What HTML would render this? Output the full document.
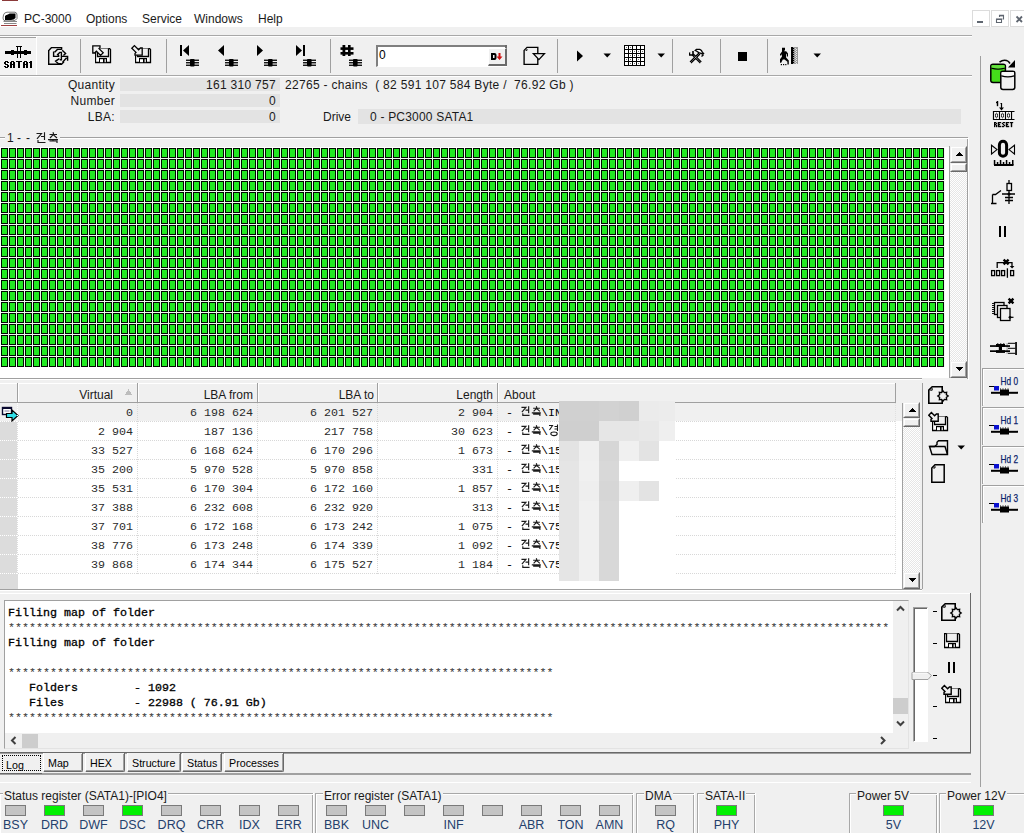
<!DOCTYPE html><html><head><meta charset="utf-8"><style>
html,body{margin:0;padding:0}
body{width:1024px;height:833px;overflow:hidden;position:relative;background:#f0f0f0;font-family:"Liberation Sans",sans-serif;font-size:12px;color:#000}
.t{position:absolute;white-space:pre;line-height:14px}
.m{font-family:"Liberation Mono",monospace;font-size:11.67px;line-height:15px}
.s{font-size:11px}
</style></head><body>
<div style="position:absolute;left:0px;top:0px;width:1024px;height:27px;background:#fff"></div>
<div style="position:absolute;left:2px;top:0px;width:16px;height:1px;background:#8b3a3a"></div>
<div style="position:absolute;left:1px;top:25px;width:16px;height:1px;background:#a04040"></div>
<div class="t " style="left:24px;top:12px;color:#1a1a1a">PC-3000</div>
<div class="t " style="left:86px;top:12px;color:#1a1a1a">Options</div>
<div class="t " style="left:142px;top:12px;color:#1a1a1a">Service</div>
<div class="t " style="left:194px;top:12px;color:#1a1a1a">Windows</div>
<div class="t " style="left:258px;top:12px;color:#1a1a1a">Help</div>
<div style="position:absolute;left:972px;top:10px;width:18px;height:17px;background:#fff;box-sizing:border-box;border:1px solid #dcdcdc"></div>
<div style="position:absolute;left:991px;top:10px;width:18px;height:17px;background:#fff;box-sizing:border-box;border:1px solid #dcdcdc"></div>
<div style="position:absolute;left:1010px;top:10px;width:18px;height:17px;background:#fff;box-sizing:border-box;border:1px solid #dcdcdc"></div>
<div style="position:absolute;left:977px;top:21px;width:6px;height:2px;background:#5f6670"></div>
<svg style="position:absolute;left:995px;top:14px;shape-rendering:auto" width="10" height="10" viewBox="0 0 10 10" shape-rendering="crispEdges"><path d="M4.5 3V1.2H8.5V5H7.5M1.5 5.2H6.5V8.5H1.5Z" fill="none" stroke="#5f6670" stroke-width="1.1"/><rect x="4" y="1" width="5" height="1.4" fill="#5f6670"/><rect x="1" y="4.6" width="6" height="1.4" fill="#5f6670"/></svg>
<svg style="position:absolute;left:1015px;top:15px;shape-rendering:auto" width="9" height="10" viewBox="0 0 9 10" shape-rendering="crispEdges"><path d="M1.5 1.5L7 7M7 1.5L1.5 7" stroke="#5f6670" stroke-width="1.8"/></svg>
<svg style="position:absolute;left:1px;top:11px;shape-rendering:auto" width="18" height="14" viewBox="0 0 18 14" shape-rendering="crispEdges"><path d="M2.5 4Q3 1.5 6 1.2H14Q16 1.5 16 4V7.5Q15 9.5 12 9.8H4Q2 9.5 2 7Z" fill="#fff" stroke="#777" stroke-width="1"/><path d="M4 5Q6 2.5 9 2.5H14.5V7Q13 9 10 9H4Z" fill="#000"/><path d="M2.5 10.5H16M3 12.5H15.5" stroke="#888" stroke-width="1.1"/><path d="M5 3.5L8 2.5" stroke="#fff" stroke-width="1"/></svg>
<div style="position:absolute;left:0px;top:35px;width:972px;height:1px;background:#a8a8a8"></div>
<div style="position:absolute;left:0px;top:36px;width:972px;height:1px;background:#fff"></div>
<div style="position:absolute;left:0px;top:75px;width:972px;height:1px;background:#a8a8a8"></div>
<div style="position:absolute;left:0px;top:76px;width:972px;height:1px;background:#fff"></div>
<div style="position:absolute;left:36px;top:37px;width:1px;height:38px;background:#fff"></div>
<div style="position:absolute;left:80px;top:39px;width:1px;height:34px;background:#a0a0a0"></div>
<div style="position:absolute;left:166px;top:39px;width:1px;height:34px;background:#a0a0a0"></div>
<div style="position:absolute;left:330px;top:39px;width:1px;height:34px;background:#a0a0a0"></div>
<div style="position:absolute;left:557px;top:39px;width:1px;height:34px;background:#a0a0a0"></div>
<div style="position:absolute;left:672px;top:39px;width:1px;height:34px;background:#a0a0a0"></div>
<div style="position:absolute;left:720px;top:39px;width:1px;height:34px;background:#a0a0a0"></div>
<div style="position:absolute;left:767px;top:39px;width:1px;height:34px;background:#a0a0a0"></div>
<div style="position:absolute;left:376px;top:45px;width:131px;height:22px;background:#fff;box-sizing:border-box;border-style:solid;border-width:2px 1px 1px 2px;border-color:#7f7f7f #fff #fff #7f7f7f"></div>
<div style="position:absolute;left:505px;top:45px;width:2px;height:21px;background:#6a6a6a"></div>
<div class="t " style="left:379px;top:48px;font-size:12px">0</div>
<div style="position:absolute;left:488px;top:48px;width:19px;height:18px;background:#f0f0f0;box-sizing:border-box;border-style:solid;border-width:1px 2px 2px 1px;border-color:#fff #6a6a6a #6a6a6a #fff"></div>
<div style="position:absolute;left:0px;top:37px;width:36px;height:1px;background:#a0a0a0"></div>
<div style="position:absolute;left:0px;top:38px;width:36px;height:37px;background:#f3f3f3"></div>
<svg style="position:absolute;left:0px;top:40px;" width="36" height="20" viewBox="0 0 36 20" shape-rendering="crispEdges"><g fill="#000"><rect x="5" y="11" width="26" height="3"/><rect x="11" y="10" width="3" height="5"/><rect x="24" y="10" width="3" height="5"/><rect x="16" y="6" width="6" height="1"/><rect x="17" y="6" width="1" height="12"/><rect x="20" y="6" width="1" height="12"/><rect x="18" y="11" width="2" height="3"/></g></svg>
<svg style="position:absolute;left:4px;top:61px;" width="29" height="7" viewBox="0 0 29 7" shape-rendering="crispEdges"><g fill="#000"><rect x="1" y="0" width="1" height="1"/><rect x="2" y="0" width="1" height="1"/><rect x="3" y="0" width="1" height="1"/><rect x="0" y="1" width="1" height="1"/><rect x="1" y="1" width="1" height="1"/><rect x="3" y="1" width="1" height="1"/><rect x="4" y="1" width="1" height="1"/><rect x="0" y="2" width="1" height="1"/><rect x="1" y="2" width="1" height="1"/><rect x="1" y="3" width="1" height="1"/><rect x="2" y="3" width="1" height="1"/><rect x="3" y="3" width="1" height="1"/><rect x="3" y="4" width="1" height="1"/><rect x="4" y="4" width="1" height="1"/><rect x="0" y="5" width="1" height="1"/><rect x="1" y="5" width="1" height="1"/><rect x="3" y="5" width="1" height="1"/><rect x="4" y="5" width="1" height="1"/><rect x="1" y="6" width="1" height="1"/><rect x="2" y="6" width="1" height="1"/><rect x="3" y="6" width="1" height="1"/><rect x="7" y="0" width="1" height="1"/><rect x="8" y="0" width="1" height="1"/><rect x="9" y="0" width="1" height="1"/><rect x="6" y="1" width="1" height="1"/><rect x="7" y="1" width="1" height="1"/><rect x="9" y="1" width="1" height="1"/><rect x="10" y="1" width="1" height="1"/><rect x="6" y="2" width="1" height="1"/><rect x="7" y="2" width="1" height="1"/><rect x="9" y="2" width="1" height="1"/><rect x="10" y="2" width="1" height="1"/><rect x="6" y="3" width="1" height="1"/><rect x="7" y="3" width="1" height="1"/><rect x="8" y="3" width="1" height="1"/><rect x="9" y="3" width="1" height="1"/><rect x="10" y="3" width="1" height="1"/><rect x="6" y="4" width="1" height="1"/><rect x="7" y="4" width="1" height="1"/><rect x="9" y="4" width="1" height="1"/><rect x="10" y="4" width="1" height="1"/><rect x="6" y="5" width="1" height="1"/><rect x="7" y="5" width="1" height="1"/><rect x="9" y="5" width="1" height="1"/><rect x="10" y="5" width="1" height="1"/><rect x="6" y="6" width="1" height="1"/><rect x="7" y="6" width="1" height="1"/><rect x="9" y="6" width="1" height="1"/><rect x="10" y="6" width="1" height="1"/><rect x="12" y="0" width="1" height="1"/><rect x="13" y="0" width="1" height="1"/><rect x="14" y="0" width="1" height="1"/><rect x="15" y="0" width="1" height="1"/><rect x="16" y="0" width="1" height="1"/><rect x="17" y="0" width="1" height="1"/><rect x="14" y="1" width="1" height="1"/><rect x="15" y="1" width="1" height="1"/><rect x="14" y="2" width="1" height="1"/><rect x="15" y="2" width="1" height="1"/><rect x="14" y="3" width="1" height="1"/><rect x="15" y="3" width="1" height="1"/><rect x="14" y="4" width="1" height="1"/><rect x="15" y="4" width="1" height="1"/><rect x="14" y="5" width="1" height="1"/><rect x="15" y="5" width="1" height="1"/><rect x="14" y="6" width="1" height="1"/><rect x="15" y="6" width="1" height="1"/><rect x="20" y="0" width="1" height="1"/><rect x="21" y="0" width="1" height="1"/><rect x="22" y="0" width="1" height="1"/><rect x="19" y="1" width="1" height="1"/><rect x="20" y="1" width="1" height="1"/><rect x="22" y="1" width="1" height="1"/><rect x="23" y="1" width="1" height="1"/><rect x="19" y="2" width="1" height="1"/><rect x="20" y="2" width="1" height="1"/><rect x="22" y="2" width="1" height="1"/><rect x="23" y="2" width="1" height="1"/><rect x="19" y="3" width="1" height="1"/><rect x="20" y="3" width="1" height="1"/><rect x="21" y="3" width="1" height="1"/><rect x="22" y="3" width="1" height="1"/><rect x="23" y="3" width="1" height="1"/><rect x="19" y="4" width="1" height="1"/><rect x="20" y="4" width="1" height="1"/><rect x="22" y="4" width="1" height="1"/><rect x="23" y="4" width="1" height="1"/><rect x="19" y="5" width="1" height="1"/><rect x="20" y="5" width="1" height="1"/><rect x="22" y="5" width="1" height="1"/><rect x="23" y="5" width="1" height="1"/><rect x="19" y="6" width="1" height="1"/><rect x="20" y="6" width="1" height="1"/><rect x="22" y="6" width="1" height="1"/><rect x="23" y="6" width="1" height="1"/><rect x="26" y="0" width="1" height="1"/><rect x="27" y="0" width="1" height="1"/><rect x="25" y="1" width="1" height="1"/><rect x="26" y="1" width="1" height="1"/><rect x="27" y="1" width="1" height="1"/><rect x="26" y="2" width="1" height="1"/><rect x="27" y="2" width="1" height="1"/><rect x="26" y="3" width="1" height="1"/><rect x="27" y="3" width="1" height="1"/><rect x="26" y="4" width="1" height="1"/><rect x="27" y="4" width="1" height="1"/><rect x="26" y="5" width="1" height="1"/><rect x="27" y="5" width="1" height="1"/><rect x="26" y="6" width="1" height="1"/><rect x="27" y="6" width="1" height="1"/></g></svg>
<svg style="position:absolute;left:44px;top:42px;shape-rendering:auto" width="28" height="26" viewBox="0 0 28 26" shape-rendering="crispEdges"><g fill="none" stroke="#000" stroke-width="1.4" stroke-linejoin="miter"><path d="M7.3 5.6H17.6V7.8M5 8.2L7.6 5.6M4.7 8V22.3H17.5L20 19.8"/><path d="M9.6 9.6V14.4H14.6V13.4L13.6 12.4L15.8 10.4H17.4V17.8H15.8M10.6 10.2L13.4 7.4H17.6"/><path d="M18.2 8.2L21.6 11.4L19.4 13.6"/><path d="M18 14.4H23.6V18.8M22.6 15.8L18.6 20.2M15.4 16.6L11.6 19.2L14.2 21.6H17.4"/></g></svg>
<svg style="position:absolute;left:95px;top:48px;shape-rendering:auto" width="17" height="16" viewBox="0 0 17 16" shape-rendering="crispEdges"><path d="M0.5 0.5H14.5L15.5 1.5V14.5H0.5Z" fill="#fff" stroke="#000" stroke-width="1.3"/><path d="M2.5 0.5V8.5H13.5V0.5" fill="#f0f0f0" stroke="#000" stroke-width="1.3"/><rect x="4" y="10" width="8" height="5" fill="#000"/><rect x="5" y="11.2" width="3" height="3" fill="#fff"/><rect x="9.6" y="11.2" width="1.2" height="3" fill="#fff"/></svg>
<svg style="position:absolute;left:91px;top:44px;shape-rendering:auto" width="14" height="14" viewBox="0 0 14 14" shape-rendering="crispEdges"><path d="M1.8 1.8H9V3.6L8 4.6L12.2 8.8L9.6 11.4L5.4 7.2L3.6 9H1.8Z" fill="#f0f0f0" stroke="#000" stroke-width="1.3" stroke-linejoin="miter"/></svg>
<svg style="position:absolute;left:135px;top:48px;shape-rendering:auto" width="17" height="16" viewBox="0 0 17 16" shape-rendering="crispEdges"><path d="M0.5 0.5H14.5L15.5 1.5V14.5H0.5Z" fill="#fff" stroke="#000" stroke-width="1.3"/><path d="M2.5 0.5V8.5H13.5V0.5" fill="#f0f0f0" stroke="#000" stroke-width="1.3"/><rect x="4" y="10" width="8" height="5" fill="#000"/><rect x="5" y="11.2" width="3" height="3" fill="#fff"/><rect x="9.6" y="11.2" width="1.2" height="3" fill="#fff"/></svg>
<svg style="position:absolute;left:130px;top:43px;shape-rendering:auto" width="14" height="14" viewBox="0 0 14 14" shape-rendering="crispEdges"><path d="M12.2 12.2H5V10.4L6 9.4L1.8 5.2L4.4 2.6L8.6 6.8L10.4 5H12.2Z" fill="#f0f0f0" stroke="#000" stroke-width="1.3"/></svg>
<svg style="position:absolute;left:179px;top:45px;shape-rendering:auto" width="12" height="12" viewBox="0 0 12 12" shape-rendering="crispEdges"><rect x="1" y="0" width="2" height="11" fill="#000"/><path d="M4 5.5L10 0V11Z" fill="#000"/></svg>
<svg style="position:absolute;left:186px;top:59px;shape-rendering:auto" width="13" height="8" viewBox="0 0 13 8" shape-rendering="crispEdges"><g fill="#000"><rect x="0" y="0.6" width="13" height="1.3"/><rect x="0" y="3.1" width="13" height="1.3"/><rect x="0" y="5.6" width="13" height="1.3"/><rect x="4" y="0" width="4.6" height="7.5" rx="1"/></g></svg>
<svg style="position:absolute;left:217px;top:45px;shape-rendering:auto" width="8" height="12" viewBox="0 0 8 12" shape-rendering="crispEdges"><path d="M1 5.5L7 0V11Z" fill="#000"/></svg>
<svg style="position:absolute;left:225px;top:59px;shape-rendering:auto" width="13" height="8" viewBox="0 0 13 8" shape-rendering="crispEdges"><g fill="#000"><rect x="0" y="0.6" width="13" height="1.3"/><rect x="0" y="3.1" width="13" height="1.3"/><rect x="0" y="5.6" width="13" height="1.3"/><rect x="4" y="0" width="4.6" height="7.5" rx="1"/></g></svg>
<svg style="position:absolute;left:256px;top:45px;shape-rendering:auto" width="8" height="12" viewBox="0 0 8 12" shape-rendering="crispEdges"><path d="M7 5.5L1 0V11Z" fill="#000"/></svg>
<svg style="position:absolute;left:264px;top:59px;shape-rendering:auto" width="13" height="8" viewBox="0 0 13 8" shape-rendering="crispEdges"><g fill="#000"><rect x="0" y="0.6" width="13" height="1.3"/><rect x="0" y="3.1" width="13" height="1.3"/><rect x="0" y="5.6" width="13" height="1.3"/><rect x="4" y="0" width="4.6" height="7.5" rx="1"/></g></svg>
<svg style="position:absolute;left:295px;top:45px;shape-rendering:auto" width="12" height="12" viewBox="0 0 12 12" shape-rendering="crispEdges"><path d="M7 5.5L1 0V11Z" fill="#000"/><rect x="8" y="0" width="2" height="11" fill="#000"/></svg>
<svg style="position:absolute;left:303px;top:59px;shape-rendering:auto" width="13" height="8" viewBox="0 0 13 8" shape-rendering="crispEdges"><g fill="#000"><rect x="0" y="0.6" width="13" height="1.3"/><rect x="0" y="3.1" width="13" height="1.3"/><rect x="0" y="5.6" width="13" height="1.3"/><rect x="4" y="0" width="4.6" height="7.5" rx="1"/></g></svg>
<svg style="position:absolute;left:340px;top:45px;shape-rendering:auto" width="15" height="12" viewBox="0 0 15 12" shape-rendering="crispEdges"><g fill="#000"><rect x="2.5" y="0" width="2.8" height="11"/><rect x="8" y="0" width="2.6" height="11"/><rect x="0.5" y="2.3" width="13" height="2.6"/><rect x="0.5" y="7" width="13" height="2.6"/></g></svg>
<svg style="position:absolute;left:349px;top:59px;shape-rendering:auto" width="13" height="8" viewBox="0 0 13 8" shape-rendering="crispEdges"><g fill="#000"><rect x="0" y="0.6" width="13" height="1.3"/><rect x="0" y="3.1" width="13" height="1.3"/><rect x="0" y="5.6" width="13" height="1.3"/><rect x="4" y="0" width="4.6" height="7.5" rx="1"/></g></svg>
<svg style="position:absolute;left:490px;top:52px;shape-rendering:auto" width="14" height="10" viewBox="0 0 14 10" shape-rendering="crispEdges"><path d="M1 1H4.5Q6.5 1 6.5 3V6Q6.5 8 4.5 8H1Z" fill="#000"/><rect x="3" y="3" width="1.5" height="3" fill="#f0f0f0"/><path d="M8.5 1H10.5V4.5H12.5L9.5 8L6.5 4.5H8.5Z" fill="#d01010"/></svg>
<svg style="position:absolute;left:522px;top:46px;shape-rendering:auto" width="24" height="20" viewBox="0 0 24 20" shape-rendering="crispEdges"><path d="M5 1.4H15.8V18.4H2.1V4.4Z" fill="none" stroke="#000" stroke-width="1.35"/><path d="M3.6 4.4H5V3" fill="none" stroke="#000" stroke-width="0.9"/><path d="M11.4 7.6H22.4L16.9 13.6Z" fill="#f0f0f0" stroke="#000" stroke-width="1.35" stroke-linejoin="miter"/></svg>
<svg style="position:absolute;left:576px;top:50px;shape-rendering:auto" width="8" height="12" viewBox="0 0 8 12" shape-rendering="crispEdges"><path d="M1 0.5L7 6L1 11.5Z" fill="#000"/></svg>
<svg style="position:absolute;left:603px;top:53px;shape-rendering:auto" width="9" height="5" viewBox="0 0 9 5" shape-rendering="crispEdges"><path d="M0.5 0.5H8L4.2 4.5Z" fill="#000"/></svg>
<svg style="position:absolute;left:624px;top:45px;" width="21" height="21" viewBox="0 0 21 21" shape-rendering="crispEdges"><rect x="0" y="0" width="21" height="21" fill="#000"/><rect x="1" y="1" width="3" height="3" fill="#fff"/><rect x="2" y="2" width="1" height="1" fill="#777"/><rect x="5" y="1" width="3" height="3" fill="#fff"/><rect x="6" y="2" width="1" height="1" fill="#777"/><rect x="9" y="1" width="3" height="3" fill="#fff"/><rect x="13" y="1" width="3" height="3" fill="#fff"/><rect x="17" y="1" width="3" height="3" fill="#fff"/><rect x="1" y="5" width="3" height="3" fill="#fff"/><rect x="5" y="5" width="3" height="3" fill="#fff"/><rect x="6" y="6" width="1" height="1" fill="#777"/><rect x="9" y="5" width="3" height="3" fill="#fff"/><rect x="10" y="6" width="1" height="1" fill="#777"/><rect x="13" y="5" width="3" height="3" fill="#fff"/><rect x="14" y="6" width="1" height="1" fill="#777"/><rect x="17" y="5" width="3" height="3" fill="#fff"/><rect x="18" y="6" width="1" height="1" fill="#777"/><rect x="1" y="9" width="3" height="3" fill="#fff"/><rect x="5" y="9" width="3" height="3" fill="#fff"/><rect x="6" y="10" width="1" height="1" fill="#777"/><rect x="9" y="9" width="3" height="3" fill="#fff"/><rect x="10" y="10" width="1" height="1" fill="#777"/><rect x="13" y="9" width="3" height="3" fill="#fff"/><rect x="14" y="10" width="1" height="1" fill="#777"/><rect x="17" y="9" width="3" height="3" fill="#fff"/><rect x="1" y="13" width="3" height="3" fill="#fff"/><rect x="2" y="14" width="1" height="1" fill="#777"/><rect x="5" y="13" width="3" height="3" fill="#fff"/><rect x="6" y="14" width="1" height="1" fill="#777"/><rect x="9" y="13" width="3" height="3" fill="#fff"/><rect x="13" y="13" width="3" height="3" fill="#fff"/><rect x="14" y="14" width="1" height="1" fill="#777"/><rect x="17" y="13" width="3" height="3" fill="#fff"/><rect x="1" y="17" width="3" height="3" fill="#fff"/><rect x="5" y="17" width="3" height="3" fill="#fff"/><rect x="6" y="18" width="1" height="1" fill="#777"/><rect x="9" y="17" width="3" height="3" fill="#fff"/><rect x="10" y="18" width="1" height="1" fill="#777"/><rect x="13" y="17" width="3" height="3" fill="#fff"/><rect x="14" y="18" width="1" height="1" fill="#777"/><rect x="17" y="17" width="3" height="3" fill="#fff"/></svg>
<svg style="position:absolute;left:657px;top:53px;shape-rendering:auto" width="9" height="5" viewBox="0 0 9 5" shape-rendering="crispEdges"><path d="M0.5 0.5H8L4.2 4.5Z" fill="#000"/></svg>
<svg style="position:absolute;left:684px;top:44px;shape-rendering:auto" width="24" height="22" viewBox="0 0 24 22" shape-rendering="crispEdges"><path d="M6.5 18.5L15.5 9.5M16.8 18.5L8.8 10.5" stroke="#000" stroke-width="2.6"/><path d="M6.5 18.5L15.5 9.5M16.8 18.5L8.8 10.5" stroke="#fff" stroke-width="0.9" stroke-dasharray="0.8 0.9"/><path d="M5 8.7L6.2 8V10.2H8.2V7H9.8V11.7H5Z" fill="#000"/><path d="M11.2 6.4L12.4 5.4H15.8L17.4 6.4L18.4 8.4L19.6 9.3L18.8 10.2L17 9.4L14.8 8.6L12.8 7.2Z" fill="#fff" stroke="#000" stroke-width="1.3"/><path d="M17.5 12.5L19.5 10.8" stroke="#000" stroke-width="1.3"/></svg>
<div style="position:absolute;left:738px;top:52px;width:9px;height:9px;background:#000"></div>
<svg style="position:absolute;left:776px;top:44px;shape-rendering:auto" width="24" height="24" viewBox="0 0 24 24" shape-rendering="crispEdges"><path d="M6 3.8H9V6.6H8.2V7.2H10.2L12 9.6V12.6H10.9V10.4L10.1 9.6V13.4L12.8 16.6V20.6H11.4V17.8L8.6 15.6L6.8 15.4L5.2 18.8H4V15.2L5.9 12.8V10L5.1 11.4H4V10.2L6 7.6V6.6H6Z" fill="#000"/><rect x="4.8" y="20" width="1.2" height="1.2" fill="#000"/><rect x="7" y="20" width="1.2" height="1.2" fill="#000"/><rect x="9.2" y="20" width="1.2" height="1.2" fill="#000"/><rect x="15" y="3" width="2" height="17" fill="#000"/><rect x="17" y="3" width="5" height="17" fill="#9a9a9a"/><rect x="17" y="4" width="1" height="1" fill="#000"/><rect x="19" y="4" width="1" height="1" fill="#d8d8d8"/><rect x="20" y="5" width="1" height="1" fill="#e8e8e8"/><rect x="17" y="6" width="1" height="1" fill="#000"/><rect x="19" y="6" width="1" height="1" fill="#d8d8d8"/><rect x="20" y="7" width="1" height="1" fill="#e8e8e8"/><rect x="17" y="8" width="1" height="1" fill="#000"/><rect x="19" y="8" width="1" height="1" fill="#d8d8d8"/><rect x="20" y="9" width="1" height="1" fill="#e8e8e8"/><rect x="17" y="10" width="1" height="1" fill="#000"/><rect x="19" y="10" width="1" height="1" fill="#d8d8d8"/><rect x="20" y="11" width="1" height="1" fill="#e8e8e8"/><rect x="17" y="12" width="1" height="1" fill="#000"/><rect x="19" y="12" width="1" height="1" fill="#d8d8d8"/><rect x="20" y="13" width="1" height="1" fill="#e8e8e8"/><rect x="17" y="14" width="1" height="1" fill="#000"/><rect x="19" y="14" width="1" height="1" fill="#d8d8d8"/><rect x="20" y="15" width="1" height="1" fill="#e8e8e8"/><rect x="17" y="16" width="1" height="1" fill="#000"/><rect x="19" y="16" width="1" height="1" fill="#d8d8d8"/><rect x="20" y="17" width="1" height="1" fill="#e8e8e8"/><rect x="17" y="18" width="1" height="1" fill="#000"/><rect x="19" y="18" width="1" height="1" fill="#d8d8d8"/><rect x="20" y="19" width="1" height="1" fill="#e8e8e8"/></svg>
<svg style="position:absolute;left:813px;top:53px;shape-rendering:auto" width="9" height="5" viewBox="0 0 9 5" shape-rendering="crispEdges"><path d="M0.5 0.5H8L4.2 4.5Z" fill="#000"/></svg>
<div style="position:absolute;left:980px;top:56px;width:1px;height:731px;background:#a0a0a0"></div>
<svg style="position:absolute;left:988px;top:57px;shape-rendering:auto" width="30" height="36" viewBox="0 0 30 36" shape-rendering="crispEdges"><path d="M2.8 9Q2.8 7.2 5 7.2H15.2Q17.4 7.2 17.4 9V23.6Q17.4 25.4 15.2 25.4H5Q2.8 25.4 2.8 23.6Z" fill="#44dd1a" stroke="#000" stroke-width="1.5"/><path d="M3.5 11.2Q10 13.2 16.8 11.2" stroke="#000" stroke-width="1.3" fill="none"/><path d="M3.6 8.2H16.6V10.4Q10 12 3.6 10.4Z" fill="#66e040"/><path d="M12.8 16Q12.8 14.3 15 14.3H24.6Q26.8 14.3 26.8 16V30.6Q26.8 32.4 24.6 32.4H15Q12.8 32.4 12.8 30.6Z" fill="#f0f0f0" stroke="#000" stroke-width="1.5"/><path d="M13.4 18.8Q20 20.8 26.2 18.8" stroke="#000" stroke-width="1.3" fill="none"/><path d="M13.6 15.2H26V17.8Q20 19.4 13.6 17.8Z" fill="#fafafa"/><path d="M11.5 5.2Q16 1.5 20.5 4.5L22 6.5" fill="none" stroke="#000" stroke-width="1.5"/><path d="M27 3V10.5H20Z" fill="#000"/></svg>
<svg style="position:absolute;left:990px;top:99px;shape-rendering:auto" width="28" height="30" viewBox="0 0 28 30" shape-rendering="crispEdges"><path d="M10.5 4.5H11.5V9" fill="none" stroke="#000" stroke-width="1.2"/><path d="M9 8.5H14L11.5 11.5Z" fill="#000"/><path d="M3.5 12.5H9.5V20.5H3.5Z M9.5 12.5H15.5V20.5H9.5Z M15.5 12.5H21.5V20.5H15.5Z" fill="#fff" stroke="#000" stroke-width="1.2"/><path d="M21.5 12.5H24.5M21.5 20.5H24.5" stroke="#000" stroke-width="1.2"/><g fill="none" stroke="#000" stroke-width="0.9"><ellipse cx="6.5" cy="16.5" rx="1" ry="2.3"/><ellipse cx="12.5" cy="16.5" rx="1" ry="2.3"/><ellipse cx="18.5" cy="16.5" rx="1" ry="2.3"/></g></svg>
<svg style="position:absolute;left:994px;top:122px" width="21" height="6"><g transform="scale(1.0,1)" fill="#000" stroke="#000" stroke-width="0.35"><rect x="0" y="0" width="1" height="1"/><rect x="1" y="0" width="1" height="1"/><rect x="0" y="1" width="1" height="1"/><rect x="2" y="1" width="1" height="1"/><rect x="0" y="2" width="1" height="1"/><rect x="1" y="2" width="1" height="1"/><rect x="0" y="3" width="1" height="1"/><rect x="2" y="3" width="1" height="1"/><rect x="0" y="4" width="1" height="1"/><rect x="2" y="4" width="1" height="1"/><rect x="4" y="0" width="1" height="1"/><rect x="5" y="0" width="1" height="1"/><rect x="6" y="0" width="1" height="1"/><rect x="4" y="1" width="1" height="1"/><rect x="4" y="2" width="1" height="1"/><rect x="5" y="2" width="1" height="1"/><rect x="4" y="3" width="1" height="1"/><rect x="4" y="4" width="1" height="1"/><rect x="5" y="4" width="1" height="1"/><rect x="6" y="4" width="1" height="1"/><rect x="9" y="0" width="1" height="1"/><rect x="10" y="0" width="1" height="1"/><rect x="8" y="1" width="1" height="1"/><rect x="9" y="2" width="1" height="1"/><rect x="10" y="3" width="1" height="1"/><rect x="8" y="4" width="1" height="1"/><rect x="9" y="4" width="1" height="1"/><rect x="12" y="0" width="1" height="1"/><rect x="13" y="0" width="1" height="1"/><rect x="14" y="0" width="1" height="1"/><rect x="12" y="1" width="1" height="1"/><rect x="12" y="2" width="1" height="1"/><rect x="13" y="2" width="1" height="1"/><rect x="12" y="3" width="1" height="1"/><rect x="12" y="4" width="1" height="1"/><rect x="13" y="4" width="1" height="1"/><rect x="14" y="4" width="1" height="1"/><rect x="16" y="0" width="1" height="1"/><rect x="17" y="0" width="1" height="1"/><rect x="18" y="0" width="1" height="1"/><rect x="17" y="1" width="1" height="1"/><rect x="17" y="2" width="1" height="1"/><rect x="17" y="3" width="1" height="1"/><rect x="17" y="4" width="1" height="1"/></g></svg>
<svg style="position:absolute;left:996px;top:101px" width="4" height="6"><g transform="scale(1.0,1)" fill="#000" stroke="#000" stroke-width="0.35"><rect x="1" y="0" width="1" height="1"/><rect x="0" y="1" width="1" height="1"/><rect x="1" y="1" width="1" height="1"/><rect x="1" y="2" width="1" height="1"/><rect x="1" y="3" width="1" height="1"/><rect x="1" y="4" width="1" height="1"/></g></svg>
<svg style="position:absolute;left:988px;top:136px;shape-rendering:auto" width="30" height="32" viewBox="0 0 30 32" shape-rendering="crispEdges"><path d="M3.5 9.2L9 13.6L3.5 18Z" fill="#f0f0f0" stroke="#000" stroke-width="1.1"/><path d="M26.5 9.2L21 13.6L26.5 18Z" fill="#f0f0f0" stroke="#000" stroke-width="1.1"/><rect x="11.4" y="5.3" width="7.2" height="15" rx="3.6" fill="none" stroke="#000" stroke-width="3"/><rect x="6" y="28" width="19.5" height="2" fill="#000"/><g fill="#000"><rect x="5.8" y="24" width="1.5" height="5"/><rect x="11.8" y="24" width="1.5" height="5"/><rect x="17.8" y="24" width="1.5" height="5"/><rect x="24" y="24" width="1.5" height="5"/><rect x="8.8" y="26" width="1.5" height="3"/><rect x="14.8" y="26" width="1.5" height="3"/><rect x="20.8" y="26" width="1.5" height="3"/></g></svg>
<svg style="position:absolute;left:988px;top:177px;shape-rendering:auto" width="30" height="30" viewBox="0 0 30 30" shape-rendering="crispEdges"><path d="M21 3V27M14 17H27M17 20.5H25M17 23.5H25" fill="none" stroke="#000" stroke-width="1.3"/><rect x="19" y="6.5" width="4.5" height="7" fill="#f0f0f0" stroke="#000" stroke-width="1.3"/><circle cx="21" cy="17" r="1.6" fill="#000"/><path d="M4.5 17.5V26.5M3 26.5H8.5M4.5 17.5H7.5L13 13.5" fill="none" stroke="#000" stroke-width="1.3"/></svg>
<div style="position:absolute;left:999px;top:226px;width:2px;height:11px;background:#000"></div>
<div style="position:absolute;left:1004px;top:226px;width:2px;height:11px;background:#000"></div>
<svg style="position:absolute;left:988px;top:256px;shape-rendering:auto" width="30" height="24" viewBox="0 0 30 24" shape-rendering="crispEdges"><path d="M9.2 12V6.7H24V10.5" fill="none" stroke="#000" stroke-width="1.3"/><path d="M21.8 10H26.4L24.1 12.6Z" fill="#000"/><path d="M15.6 3.6L20.6 8.3M20.6 3.6L15.6 8.3" stroke="#000" stroke-width="2.4"/><g fill="none" stroke="#000" stroke-width="1.3"><rect x="3.6" y="14.6" width="3" height="5"/><rect x="8.6" y="14.6" width="3" height="5"/><rect x="13.6" y="14.6" width="3" height="5"/><rect x="22.6" y="14.6" width="3" height="5"/></g><path d="M19.4 12.3V21.8" stroke="#000" stroke-width="1.3"/></svg>
<svg style="position:absolute;left:988px;top:296px;shape-rendering:auto" width="30" height="28" viewBox="0 0 30 28" shape-rendering="crispEdges"><g fill="#f0f0f0" stroke="#000" stroke-width="1.3"><rect x="6.5" y="6.5" width="9.5" height="12"/><rect x="9.5" y="9.5" width="9.5" height="12"/><rect x="12.5" y="12.5" width="9.5" height="12"/></g><path d="M4 7.5H6M4 9.5H6M4 11.5H6M4 13.5H6M4 15.5H6M4 17.5H6" stroke="#000" stroke-width="0.9"/><path d="M20.6 2.6L25.4 7.4M25.4 2.6L20.6 7.4" stroke="#000" stroke-width="2.4"/><circle cx="22" cy="21.3" r="1.4" fill="#000"/><path d="M22 21.3H25.5" stroke="#000" stroke-width="1.2"/></svg>
<svg style="position:absolute;left:988px;top:339px;shape-rendering:auto" width="32" height="20" viewBox="0 0 32 20" shape-rendering="crispEdges"><rect x="18.6" y="4" width="1" height="11" fill="#999"/><g fill="#000"><rect x="2" y="6.2" width="20" height="1.7"/><rect x="2" y="11.3" width="20" height="1.7"/><path d="M8 5H9L9.8 4L10.6 5H12L12.8 4L13.6 5H15L15.8 4L16.6 5H17V7.9H8Z"/><rect x="8" y="11.3" width="9" height="2.6"/><rect x="10.8" y="7.8" width="3.2" height="3.6"/><rect x="27.2" y="3" width="1.7" height="13"/><rect x="20" y="3.8" width="7.5" height="1"/><rect x="20" y="8.8" width="7.5" height="1"/><rect x="20" y="13.8" width="7.5" height="1"/></g></svg>
<div style="position:absolute;left:982px;top:368px;width:42px;height:38px;box-sizing:border-box;border-top:1px solid #a0a0a0;border-left:1px solid #a0a0a0;background:#f0f0f0"></div>
<div style="position:absolute;left:983px;top:369px;width:41px;height:1px;background:#fff"></div>
<div style="position:absolute;left:983px;top:369px;width:1px;height:36px;background:#fff"></div>
<svg style="position:absolute;left:988px;top:374px;shape-rendering:auto" width="34" height="24" viewBox="0 0 34 24" shape-rendering="crispEdges"><text x="12.5" y="11" font-family="Liberation Sans" font-size="10.5" textLength="17.5" lengthAdjust="spacingAndGlyphs" fill="#0b1f6b" stroke="#0b1f6b" stroke-width="0.25">Hd 0</text><path d="M1 12.5H6" stroke="#000" stroke-width="1"/><rect x="6" y="12" width="5" height="4.5" fill="#0a10d0"/><path d="M3 18.8H30" stroke="#000" stroke-width="2"/><path d="M12 15.5H21V21.5H12Z" fill="#000"/><path d="M12.5 15.5V14.5M15 15.5V14.5M17.5 15.5V14.5M20 15.5V14.5" stroke="#000" stroke-width="1"/></svg>
<div style="position:absolute;left:982px;top:407px;width:42px;height:38px;box-sizing:border-box;border-top:1px solid #a0a0a0;border-left:1px solid #a0a0a0;background:#f0f0f0"></div>
<div style="position:absolute;left:983px;top:408px;width:41px;height:1px;background:#fff"></div>
<div style="position:absolute;left:983px;top:408px;width:1px;height:36px;background:#fff"></div>
<svg style="position:absolute;left:988px;top:413px;shape-rendering:auto" width="34" height="24" viewBox="0 0 34 24" shape-rendering="crispEdges"><text x="12.5" y="11" font-family="Liberation Sans" font-size="10.5" textLength="17.5" lengthAdjust="spacingAndGlyphs" fill="#0b1f6b" stroke="#0b1f6b" stroke-width="0.25">Hd 1</text><path d="M1 12.5H6" stroke="#000" stroke-width="1"/><rect x="6" y="12" width="5" height="4.5" fill="#0a10d0"/><path d="M3 18.8H30" stroke="#000" stroke-width="2"/><path d="M12 15.5H21V21.5H12Z" fill="#000"/><path d="M12.5 15.5V14.5M15 15.5V14.5M17.5 15.5V14.5M20 15.5V14.5" stroke="#000" stroke-width="1"/></svg>
<div style="position:absolute;left:982px;top:446px;width:42px;height:38px;box-sizing:border-box;border-top:1px solid #a0a0a0;border-left:1px solid #a0a0a0;background:#f0f0f0"></div>
<div style="position:absolute;left:983px;top:447px;width:41px;height:1px;background:#fff"></div>
<div style="position:absolute;left:983px;top:447px;width:1px;height:36px;background:#fff"></div>
<svg style="position:absolute;left:988px;top:452px;shape-rendering:auto" width="34" height="24" viewBox="0 0 34 24" shape-rendering="crispEdges"><text x="12.5" y="11" font-family="Liberation Sans" font-size="10.5" textLength="17.5" lengthAdjust="spacingAndGlyphs" fill="#0b1f6b" stroke="#0b1f6b" stroke-width="0.25">Hd 2</text><path d="M1 12.5H6" stroke="#000" stroke-width="1"/><rect x="6" y="12" width="5" height="4.5" fill="#0a10d0"/><path d="M3 18.8H30" stroke="#000" stroke-width="2"/><path d="M12 15.5H21V21.5H12Z" fill="#000"/><path d="M12.5 15.5V14.5M15 15.5V14.5M17.5 15.5V14.5M20 15.5V14.5" stroke="#000" stroke-width="1"/></svg>
<div style="position:absolute;left:982px;top:485px;width:42px;height:38px;box-sizing:border-box;border-top:1px solid #a0a0a0;border-left:1px solid #a0a0a0;background:#f0f0f0"></div>
<div style="position:absolute;left:983px;top:486px;width:41px;height:1px;background:#fff"></div>
<div style="position:absolute;left:983px;top:486px;width:1px;height:36px;background:#fff"></div>
<svg style="position:absolute;left:988px;top:491px;shape-rendering:auto" width="34" height="24" viewBox="0 0 34 24" shape-rendering="crispEdges"><text x="12.5" y="11" font-family="Liberation Sans" font-size="10.5" textLength="17.5" lengthAdjust="spacingAndGlyphs" fill="#0b1f6b" stroke="#0b1f6b" stroke-width="0.25">Hd 3</text><path d="M1 12.5H6" stroke="#000" stroke-width="1"/><rect x="6" y="12" width="5" height="4.5" fill="#0a10d0"/><path d="M3 18.8H30" stroke="#000" stroke-width="2"/><path d="M12 15.5H21V21.5H12Z" fill="#000"/><path d="M12.5 15.5V14.5M15 15.5V14.5M17.5 15.5V14.5M20 15.5V14.5" stroke="#000" stroke-width="1"/></svg>
<svg style="position:absolute;left:928px;top:386px;shape-rendering:auto" width="22" height="20" viewBox="0 0 22 20" shape-rendering="crispEdges"><path d="M4.2 0.8H14.2V17.2H0.8V4.2Z" fill="#f0f0f0" stroke="#000" stroke-width="1.6"/><path d="M2.2 4.2H4.2V2.2" fill="none" stroke="#000" stroke-width="1"/><polygon points="20.20,10.00 18.33,11.38 18.68,13.68 16.38,13.33 15.00,15.20 13.62,13.33 11.32,13.68 11.67,11.38 9.80,10.00 11.67,8.62 11.32,6.32 13.62,6.67 15.00,4.80 16.38,6.67 18.68,6.32 18.33,8.62" fill="#f0f0f0" stroke="#000" stroke-width="1.3"/></svg>
<svg style="position:absolute;left:932px;top:416px;shape-rendering:auto" width="17" height="16" viewBox="0 0 17 16" shape-rendering="crispEdges"><path d="M0.5 0.5H14.5L15.5 1.5V14.5H0.5Z" fill="#fff" stroke="#000" stroke-width="1.3"/><path d="M2.5 0.5V8.5H13.5V0.5" fill="#f0f0f0" stroke="#000" stroke-width="1.3"/><rect x="4" y="10" width="8" height="5" fill="#000"/><rect x="5" y="11.2" width="3" height="3" fill="#fff"/><rect x="9.6" y="11.2" width="1.2" height="3" fill="#fff"/></svg>
<svg style="position:absolute;left:928px;top:411px;shape-rendering:auto" width="12" height="12" viewBox="0 0 12 12" shape-rendering="crispEdges"><path d="M10.2 10.2H3V8.4L4 7.4L0.8 4.2L3.4 1.6L6.6 4.8L8.4 3H10.2Z" fill="#f0f0f0" stroke="#000" stroke-width="1.4"/></svg>
<svg style="position:absolute;left:928px;top:440px;shape-rendering:auto" width="24" height="17" viewBox="0 0 24 17" shape-rendering="crispEdges"><path d="M1.5 6.5H6.5L9 4.5V2.2L10.5 0.8H19.5V14.5H4L1.5 6.5Z" fill="#f0f0f0" stroke="#000" stroke-width="1.4"/><path d="M1.5 6.5H17L19.5 14.5" fill="none" stroke="#000" stroke-width="1.4"/></svg>
<svg style="position:absolute;left:957px;top:445px;shape-rendering:auto" width="9" height="5" viewBox="0 0 9 5" shape-rendering="crispEdges"><path d="M0.5 0.5H8L4.2 4.5Z" fill="#000"/></svg>
<svg style="position:absolute;left:931px;top:464px;shape-rendering:auto" width="16" height="20" viewBox="0 0 16 20" shape-rendering="crispEdges"><path d="M4 0.8H13.2V18.2H0.8V4Z" fill="#f0f0f0" stroke="#000" stroke-width="1.5"/><path d="M2.2 4H4V2.2" fill="none" stroke="#000" stroke-width="1"/></svg>
<svg style="position:absolute;left:941px;top:603px;shape-rendering:auto" width="22" height="20" viewBox="0 0 22 20" shape-rendering="crispEdges"><path d="M4.2 0.8H14.2V17.2H0.8V4.2Z" fill="#f0f0f0" stroke="#000" stroke-width="1.6"/><path d="M2.2 4.2H4.2V2.2" fill="none" stroke="#000" stroke-width="1"/><polygon points="20.20,10.00 18.33,11.38 18.68,13.68 16.38,13.33 15.00,15.20 13.62,13.33 11.32,13.68 11.67,11.38 9.80,10.00 11.67,8.62 11.32,6.32 13.62,6.67 15.00,4.80 16.38,6.67 18.68,6.32 18.33,8.62" fill="#f0f0f0" stroke="#000" stroke-width="1.3"/></svg>
<svg style="position:absolute;left:944px;top:633px;shape-rendering:auto" width="17" height="16" viewBox="0 0 17 16" shape-rendering="crispEdges"><path d="M0.5 0.5H14.5L15.5 1.5V14.5H0.5Z" fill="#fff" stroke="#000" stroke-width="1.3"/><path d="M2.5 0.5V8.5H13.5V0.5" fill="#f0f0f0" stroke="#000" stroke-width="1.3"/><rect x="4" y="10" width="8" height="5" fill="#000"/><rect x="5" y="11.2" width="3" height="3" fill="#fff"/><rect x="9.6" y="11.2" width="1.2" height="3" fill="#fff"/></svg>
<div style="position:absolute;left:948px;top:662px;width:2px;height:11px;background:#000"></div>
<div style="position:absolute;left:953px;top:662px;width:2px;height:11px;background:#000"></div>
<svg style="position:absolute;left:945px;top:688px;shape-rendering:auto" width="17" height="16" viewBox="0 0 17 16" shape-rendering="crispEdges"><path d="M0.5 0.5H14.5L15.5 1.5V14.5H0.5Z" fill="#fff" stroke="#000" stroke-width="1.3"/><path d="M2.5 0.5V8.5H13.5V0.5" fill="#f0f0f0" stroke="#000" stroke-width="1.3"/><rect x="4" y="10" width="8" height="5" fill="#000"/><rect x="5" y="11.2" width="3" height="3" fill="#fff"/><rect x="9.6" y="11.2" width="1.2" height="3" fill="#fff"/></svg>
<svg style="position:absolute;left:941px;top:684px;shape-rendering:auto" width="12" height="12" viewBox="0 0 12 12" shape-rendering="crispEdges"><path d="M10.2 10.2H3V8.4L4 7.4L0.8 4.2L3.4 1.6L6.6 4.8L8.4 3H10.2Z" fill="#f0f0f0" stroke="#000" stroke-width="1.4"/></svg>
<div style="position:absolute;left:120px;top:78px;width:160px;height:13px;background:#e3e3e3"></div>
<div class="t " style="left:0px;top:78px;width:115px;text-align:right;color:#1a1a1a;letter-spacing:0.3px">Quantity</div>
<div class="t " style="left:120px;top:78px;width:156px;text-align:right;color:#1a1a1a;letter-spacing:0.3px">161 310 757</div>
<div style="position:absolute;left:120px;top:94px;width:160px;height:13px;background:#e3e3e3"></div>
<div class="t " style="left:0px;top:94px;width:115px;text-align:right;color:#1a1a1a;letter-spacing:0.3px">Number</div>
<div class="t " style="left:120px;top:94px;width:156px;text-align:right;color:#1a1a1a;letter-spacing:0.3px">0</div>
<div style="position:absolute;left:120px;top:110px;width:160px;height:13px;background:#e3e3e3"></div>
<div class="t " style="left:0px;top:110px;width:115px;text-align:right;color:#1a1a1a;letter-spacing:0.3px">LBA:</div>
<div class="t " style="left:120px;top:110px;width:156px;text-align:right;color:#1a1a1a;letter-spacing:0.3px">0</div>
<div class="t " style="left:285px;top:78px;color:#1a1a1a;letter-spacing:0.3px">22765 - chains  ( 82 591 107 584 Byte /  76.92 Gb )</div>
<div class="t " style="left:323px;top:110px;color:#1a1a1a">Drive</div>
<div style="position:absolute;left:358px;top:109px;width:603px;height:15px;background:#e3e3e3"></div>
<div class="t " style="left:370px;top:110px;color:#1a1a1a;letter-spacing:0.2px">0 - PC3000 SATA1</div>
<div style="position:absolute;left:0px;top:137px;width:968px;height:1px;background:#a0a0a0"></div>
<div style="position:absolute;left:967px;top:137px;width:1px;height:242px;background:#a0a0a0"></div>
<div style="position:absolute;left:968px;top:138px;width:1px;height:242px;background:#fff"></div>
<div style="position:absolute;left:0px;top:138px;width:968px;height:1px;background:#fff"></div>
<div style="position:absolute;left:5px;top:130px;width:55px;height:14px;background:#f0f0f0"></div>
<div class="t " style="left:7px;top:131px;color:#1a1a1a">1</div>
<div class="t " style="left:17px;top:131px;color:#1a1a1a">-</div>
<div class="t " style="left:26px;top:131px;color:#1a1a1a">-</div>
<svg style="position:absolute;left:36px;top:132px" width="26" height="14"><g transform="scale(1.0)"><path d="M0.5 1.5H5.5L1 6.8M8.5 0.3V8M5 4.5H8.5M2 8V10.5H9.5M17 0.3L17.6 2M13.5 2.5H21M17.2 2.6L14 6M17.2 2.6L21 6M12 7.6H22M17 7.6V8.8M13.5 9H21V11" fill="none" stroke="#1a1a1a" stroke-width="1.15"/></g></svg>
<div style="position:absolute;left:0px;top:147px;width:949px;height:231px;background:#fff"></div>
<svg style="position:absolute;left:1px;top:148px;" width="944" height="219" viewBox="0 0 944 219" shape-rendering="crispEdges"><defs><pattern id="gp" width="8" height="11" patternUnits="userSpaceOnUse"><rect x="0" y="0" width="8" height="11" fill="#eefaee"/><rect x="0" y="0" width="7" height="10" fill="#000a00"/><rect x="1" y="1" width="5" height="8" fill="#22ea22"/></pattern></defs><rect x="0" y="0" width="944" height="219" fill="url(#gp)"/></svg>
<div style="position:absolute;left:949px;top:146px;width:18px;height:232px;box-sizing:border-box;border-left:1px solid #a0a0a0;background-color:#fff;background-image:repeating-conic-gradient(#e6e6e6 0 25%,#fff 0 50%);background-size:2px 2px"></div>
<div style="position:absolute;left:950px;top:146px;width:17px;height:17px;background:#f0f0f0;box-sizing:border-box;border:1px solid;border-color:#f0f0f0 #696969 #696969 #f0f0f0"></div>
<div style="position:absolute;left:951px;top:147px;width:15px;height:15px;box-sizing:border-box;border:1px solid;border-color:#fff #a0a0a0 #a0a0a0 #fff"></div>
<div style="position:absolute;left:950px;top:163px;width:17px;height:9px;background:#f0f0f0;box-sizing:border-box;border:1px solid;border-color:#f0f0f0 #696969 #696969 #f0f0f0"></div>
<div style="position:absolute;left:951px;top:164px;width:15px;height:7px;box-sizing:border-box;border:1px solid;border-color:#fff #a0a0a0 #a0a0a0 #fff"></div>
<div style="position:absolute;left:950px;top:361px;width:17px;height:17px;background:#f0f0f0;box-sizing:border-box;border:1px solid;border-color:#f0f0f0 #696969 #696969 #f0f0f0"></div>
<div style="position:absolute;left:951px;top:362px;width:15px;height:15px;box-sizing:border-box;border:1px solid;border-color:#fff #a0a0a0 #a0a0a0 #fff"></div>
<svg style="position:absolute;left:955px;top:152px;" width="8" height="5" viewBox="0 0 8 5" shape-rendering="crispEdges"><path d="M4 0L8 4H0Z" fill="#000"/></svg>
<svg style="position:absolute;left:955px;top:367px;" width="8" height="5" viewBox="0 0 8 5" shape-rendering="crispEdges"><path d="M0 0H8L4 4Z" fill="#000"/></svg>
<div style="position:absolute;left:0px;top:378px;width:922px;height:1px;background:#a0a0a0"></div>
<div style="position:absolute;left:0px;top:379px;width:922px;height:1px;background:#fff"></div>
<div style="position:absolute;left:0px;top:383px;width:895px;height:19px;background:#f0f0f0"></div>
<div style="position:absolute;left:0px;top:383px;width:895px;height:1px;background:#fff"></div>
<div style="position:absolute;left:0px;top:402px;width:896px;height:1px;background:#a0a0a0"></div>
<div style="position:absolute;left:17px;top:383px;width:1px;height:19px;background:#a0a0a0"></div>
<div style="position:absolute;left:18px;top:384px;width:1px;height:18px;background:#fff"></div>
<div style="position:absolute;left:137px;top:383px;width:1px;height:19px;background:#a0a0a0"></div>
<div style="position:absolute;left:138px;top:384px;width:1px;height:18px;background:#fff"></div>
<div style="position:absolute;left:257px;top:383px;width:1px;height:19px;background:#a0a0a0"></div>
<div style="position:absolute;left:258px;top:384px;width:1px;height:18px;background:#fff"></div>
<div style="position:absolute;left:377px;top:383px;width:1px;height:19px;background:#a0a0a0"></div>
<div style="position:absolute;left:378px;top:384px;width:1px;height:18px;background:#fff"></div>
<div style="position:absolute;left:497px;top:383px;width:1px;height:19px;background:#a0a0a0"></div>
<div style="position:absolute;left:498px;top:384px;width:1px;height:18px;background:#fff"></div>
<div style="position:absolute;left:895px;top:383px;width:1px;height:19px;background:#a0a0a0"></div>
<div class="t " style="left:0px;top:388px;width:113px;text-align:right;color:#1a1a1a">Virtual</div>
<svg style="position:absolute;left:125px;top:389px;" width="7" height="6" viewBox="0 0 7 6" shape-rendering="crispEdges"><path d="M3.5 0L7 6H0Z" fill="#bdbdbd"/></svg>
<div class="t " style="left:137px;top:388px;width:116px;text-align:right;color:#1a1a1a">LBA from</div>
<div class="t " style="left:257px;top:388px;width:117px;text-align:right;color:#1a1a1a">LBA to</div>
<div class="t " style="left:377px;top:388px;width:116px;text-align:right;color:#1a1a1a">Length</div>
<div class="t " style="left:504px;top:388px;color:#1a1a1a">About</div>
<div style="position:absolute;left:0px;top:403px;width:903px;height:186px;background:#fff"></div>
<div style="position:absolute;left:0px;top:403px;width:18px;height:186px;background:#dcdcdc"></div>
<div style="position:absolute;left:0px;top:403px;width:903px;height:18px;background:#f0f0f0"></div>
<div style="position:absolute;left:18px;top:421px;width:878px;height:1px;background-image:linear-gradient(90deg,#d8d8d8 50%,transparent 50%);background-size:2px 1px"></div>
<div style="position:absolute;left:0px;top:421px;width:18px;height:1px;background-image:linear-gradient(90deg,#fff 50%,transparent 50%);background-size:2px 1px"></div>
<div class="t m" style="left:17px;top:406px;width:116px;text-align:right;color:#2a2a2a">0</div>
<div class="t m" style="left:137px;top:406px;width:116px;text-align:right;color:#2a2a2a">6 198 624</div>
<div class="t m" style="left:257px;top:406px;width:116px;text-align:right;color:#2a2a2a">6 201 527</div>
<div class="t m" style="left:377px;top:406px;width:116px;text-align:right;color:#2a2a2a">2 904</div>
<div class="t m" style="left:506px;top:406px;">-</div>
<svg style="position:absolute;left:521px;top:406px" width="23" height="12"><g transform="scale(0.9)"><path d="M0.5 1.5H5.5L1 6.8M8.5 0.3V8M5 4.5H8.5M2 8V10.5H9.5M17 0.3L17.6 2M13.5 2.5H21M17.2 2.6L14 6M17.2 2.6L21 6M12 7.6H22M17 7.6V8.8M13.5 9H21V11" fill="none" stroke="#1a1a1a" stroke-width="1.28"/></g></svg>
<div class="t m" style="left:541px;top:406px;">\IN</div>
<div style="position:absolute;left:18px;top:440px;width:878px;height:1px;background-image:linear-gradient(90deg,#d8d8d8 50%,transparent 50%);background-size:2px 1px"></div>
<div style="position:absolute;left:0px;top:440px;width:18px;height:1px;background-image:linear-gradient(90deg,#fff 50%,transparent 50%);background-size:2px 1px"></div>
<div class="t m" style="left:17px;top:425px;width:116px;text-align:right;color:#2a2a2a">2 904</div>
<div class="t m" style="left:137px;top:425px;width:116px;text-align:right;color:#2a2a2a">187 136</div>
<div class="t m" style="left:257px;top:425px;width:116px;text-align:right;color:#2a2a2a">217 758</div>
<div class="t m" style="left:377px;top:425px;width:116px;text-align:right;color:#2a2a2a">30 623</div>
<div class="t m" style="left:506px;top:425px;">-</div>
<svg style="position:absolute;left:521px;top:425px" width="23" height="12"><g transform="scale(0.9)"><path d="M0.5 1.5H5.5L1 6.8M8.5 0.3V8M5 4.5H8.5M2 8V10.5H9.5M17 0.3L17.6 2M13.5 2.5H21M17.2 2.6L14 6M17.2 2.6L21 6M12 7.6H22M17 7.6V8.8M13.5 9H21V11" fill="none" stroke="#1a1a1a" stroke-width="1.28"/></g></svg>
<div class="t m" style="left:541px;top:425px;">\</div>
<svg style="position:absolute;left:548px;top:424px;shape-rendering:auto" width="11" height="13" viewBox="0 0 11 13" shape-rendering="crispEdges"><path d="M1 1.5H4.5L1.5 6M9.5 0.5V7M6.5 2.5H9.5M6.5 5H9.5" fill="none" stroke="#1a1a1a" stroke-width="1.1"/><ellipse cx="6" cy="9.8" rx="3.2" ry="1.8" fill="none" stroke="#1a1a1a" stroke-width="1.1"/></svg>
<div style="position:absolute;left:18px;top:459px;width:878px;height:1px;background-image:linear-gradient(90deg,#d8d8d8 50%,transparent 50%);background-size:2px 1px"></div>
<div style="position:absolute;left:0px;top:459px;width:18px;height:1px;background-image:linear-gradient(90deg,#fff 50%,transparent 50%);background-size:2px 1px"></div>
<div class="t m" style="left:17px;top:444px;width:116px;text-align:right;color:#2a2a2a">33 527</div>
<div class="t m" style="left:137px;top:444px;width:116px;text-align:right;color:#2a2a2a">6 168 624</div>
<div class="t m" style="left:257px;top:444px;width:116px;text-align:right;color:#2a2a2a">6 170 296</div>
<div class="t m" style="left:377px;top:444px;width:116px;text-align:right;color:#2a2a2a">1 673</div>
<div class="t m" style="left:506px;top:444px;">-</div>
<svg style="position:absolute;left:521px;top:444px" width="23" height="12"><g transform="scale(0.9)"><path d="M0.5 1.5H5.5L1 6.8M8.5 0.3V8M5 4.5H8.5M2 8V10.5H9.5M17 0.3L17.6 2M13.5 2.5H21M17.2 2.6L14 6M17.2 2.6L21 6M12 7.6H22M17 7.6V8.8M13.5 9H21V11" fill="none" stroke="#1a1a1a" stroke-width="1.28"/></g></svg>
<div class="t m" style="left:541px;top:444px;">\15</div>
<div style="position:absolute;left:18px;top:478px;width:878px;height:1px;background-image:linear-gradient(90deg,#d8d8d8 50%,transparent 50%);background-size:2px 1px"></div>
<div style="position:absolute;left:0px;top:478px;width:18px;height:1px;background-image:linear-gradient(90deg,#fff 50%,transparent 50%);background-size:2px 1px"></div>
<div class="t m" style="left:17px;top:463px;width:116px;text-align:right;color:#2a2a2a">35 200</div>
<div class="t m" style="left:137px;top:463px;width:116px;text-align:right;color:#2a2a2a">5 970 528</div>
<div class="t m" style="left:257px;top:463px;width:116px;text-align:right;color:#2a2a2a">5 970 858</div>
<div class="t m" style="left:377px;top:463px;width:116px;text-align:right;color:#2a2a2a">331</div>
<div class="t m" style="left:506px;top:463px;">-</div>
<svg style="position:absolute;left:521px;top:463px" width="23" height="12"><g transform="scale(0.9)"><path d="M0.5 1.5H5.5L1 6.8M8.5 0.3V8M5 4.5H8.5M2 8V10.5H9.5M17 0.3L17.6 2M13.5 2.5H21M17.2 2.6L14 6M17.2 2.6L21 6M12 7.6H22M17 7.6V8.8M13.5 9H21V11" fill="none" stroke="#1a1a1a" stroke-width="1.28"/></g></svg>
<div class="t m" style="left:541px;top:463px;">\15</div>
<div style="position:absolute;left:18px;top:497px;width:878px;height:1px;background-image:linear-gradient(90deg,#d8d8d8 50%,transparent 50%);background-size:2px 1px"></div>
<div style="position:absolute;left:0px;top:497px;width:18px;height:1px;background-image:linear-gradient(90deg,#fff 50%,transparent 50%);background-size:2px 1px"></div>
<div class="t m" style="left:17px;top:482px;width:116px;text-align:right;color:#2a2a2a">35 531</div>
<div class="t m" style="left:137px;top:482px;width:116px;text-align:right;color:#2a2a2a">6 170 304</div>
<div class="t m" style="left:257px;top:482px;width:116px;text-align:right;color:#2a2a2a">6 172 160</div>
<div class="t m" style="left:377px;top:482px;width:116px;text-align:right;color:#2a2a2a">1 857</div>
<div class="t m" style="left:506px;top:482px;">-</div>
<svg style="position:absolute;left:521px;top:482px" width="23" height="12"><g transform="scale(0.9)"><path d="M0.5 1.5H5.5L1 6.8M8.5 0.3V8M5 4.5H8.5M2 8V10.5H9.5M17 0.3L17.6 2M13.5 2.5H21M17.2 2.6L14 6M17.2 2.6L21 6M12 7.6H22M17 7.6V8.8M13.5 9H21V11" fill="none" stroke="#1a1a1a" stroke-width="1.28"/></g></svg>
<div class="t m" style="left:541px;top:482px;">\15</div>
<div style="position:absolute;left:18px;top:516px;width:878px;height:1px;background-image:linear-gradient(90deg,#d8d8d8 50%,transparent 50%);background-size:2px 1px"></div>
<div style="position:absolute;left:0px;top:516px;width:18px;height:1px;background-image:linear-gradient(90deg,#fff 50%,transparent 50%);background-size:2px 1px"></div>
<div class="t m" style="left:17px;top:501px;width:116px;text-align:right;color:#2a2a2a">37 388</div>
<div class="t m" style="left:137px;top:501px;width:116px;text-align:right;color:#2a2a2a">6 232 608</div>
<div class="t m" style="left:257px;top:501px;width:116px;text-align:right;color:#2a2a2a">6 232 920</div>
<div class="t m" style="left:377px;top:501px;width:116px;text-align:right;color:#2a2a2a">313</div>
<div class="t m" style="left:506px;top:501px;">-</div>
<svg style="position:absolute;left:521px;top:501px" width="23" height="12"><g transform="scale(0.9)"><path d="M0.5 1.5H5.5L1 6.8M8.5 0.3V8M5 4.5H8.5M2 8V10.5H9.5M17 0.3L17.6 2M13.5 2.5H21M17.2 2.6L14 6M17.2 2.6L21 6M12 7.6H22M17 7.6V8.8M13.5 9H21V11" fill="none" stroke="#1a1a1a" stroke-width="1.28"/></g></svg>
<div class="t m" style="left:541px;top:501px;">\15</div>
<div style="position:absolute;left:18px;top:535px;width:878px;height:1px;background-image:linear-gradient(90deg,#d8d8d8 50%,transparent 50%);background-size:2px 1px"></div>
<div style="position:absolute;left:0px;top:535px;width:18px;height:1px;background-image:linear-gradient(90deg,#fff 50%,transparent 50%);background-size:2px 1px"></div>
<div class="t m" style="left:17px;top:520px;width:116px;text-align:right;color:#2a2a2a">37 701</div>
<div class="t m" style="left:137px;top:520px;width:116px;text-align:right;color:#2a2a2a">6 172 168</div>
<div class="t m" style="left:257px;top:520px;width:116px;text-align:right;color:#2a2a2a">6 173 242</div>
<div class="t m" style="left:377px;top:520px;width:116px;text-align:right;color:#2a2a2a">1 075</div>
<div class="t m" style="left:506px;top:520px;">-</div>
<svg style="position:absolute;left:521px;top:520px" width="23" height="12"><g transform="scale(0.9)"><path d="M0.5 1.5H5.5L1 6.8M8.5 0.3V8M5 4.5H8.5M2 8V10.5H9.5M17 0.3L17.6 2M13.5 2.5H21M17.2 2.6L14 6M17.2 2.6L21 6M12 7.6H22M17 7.6V8.8M13.5 9H21V11" fill="none" stroke="#1a1a1a" stroke-width="1.28"/></g></svg>
<div class="t m" style="left:541px;top:520px;">\75</div>
<div style="position:absolute;left:18px;top:554px;width:878px;height:1px;background-image:linear-gradient(90deg,#d8d8d8 50%,transparent 50%);background-size:2px 1px"></div>
<div style="position:absolute;left:0px;top:554px;width:18px;height:1px;background-image:linear-gradient(90deg,#fff 50%,transparent 50%);background-size:2px 1px"></div>
<div class="t m" style="left:17px;top:539px;width:116px;text-align:right;color:#2a2a2a">38 776</div>
<div class="t m" style="left:137px;top:539px;width:116px;text-align:right;color:#2a2a2a">6 173 248</div>
<div class="t m" style="left:257px;top:539px;width:116px;text-align:right;color:#2a2a2a">6 174 339</div>
<div class="t m" style="left:377px;top:539px;width:116px;text-align:right;color:#2a2a2a">1 092</div>
<div class="t m" style="left:506px;top:539px;">-</div>
<svg style="position:absolute;left:521px;top:539px" width="23" height="12"><g transform="scale(0.9)"><path d="M0.5 1.5H5.5L1 6.8M8.5 0.3V8M5 4.5H8.5M2 8V10.5H9.5M17 0.3L17.6 2M13.5 2.5H21M17.2 2.6L14 6M17.2 2.6L21 6M12 7.6H22M17 7.6V8.8M13.5 9H21V11" fill="none" stroke="#1a1a1a" stroke-width="1.28"/></g></svg>
<div class="t m" style="left:541px;top:539px;">\75</div>
<div style="position:absolute;left:18px;top:573px;width:878px;height:1px;background-image:linear-gradient(90deg,#d8d8d8 50%,transparent 50%);background-size:2px 1px"></div>
<div style="position:absolute;left:0px;top:573px;width:18px;height:1px;background-image:linear-gradient(90deg,#fff 50%,transparent 50%);background-size:2px 1px"></div>
<div class="t m" style="left:17px;top:558px;width:116px;text-align:right;color:#2a2a2a">39 868</div>
<div class="t m" style="left:137px;top:558px;width:116px;text-align:right;color:#2a2a2a">6 174 344</div>
<div class="t m" style="left:257px;top:558px;width:116px;text-align:right;color:#2a2a2a">6 175 527</div>
<div class="t m" style="left:377px;top:558px;width:116px;text-align:right;color:#2a2a2a">1 184</div>
<div class="t m" style="left:506px;top:558px;">-</div>
<svg style="position:absolute;left:521px;top:558px" width="23" height="12"><g transform="scale(0.9)"><path d="M0.5 1.5H5.5L1 6.8M8.5 0.3V8M5 4.5H8.5M2 8V10.5H9.5M17 0.3L17.6 2M13.5 2.5H21M17.2 2.6L14 6M17.2 2.6L21 6M12 7.6H22M17 7.6V8.8M13.5 9H21V11" fill="none" stroke="#1a1a1a" stroke-width="1.28"/></g></svg>
<div class="t m" style="left:541px;top:558px;">\75</div>
<div style="position:absolute;left:137px;top:403px;width:1px;height:171px;background-image:linear-gradient(180deg,#d8d8d8 50%,transparent 50%);background-size:1px 2px"></div>
<div style="position:absolute;left:257px;top:403px;width:1px;height:171px;background-image:linear-gradient(180deg,#d8d8d8 50%,transparent 50%);background-size:1px 2px"></div>
<div style="position:absolute;left:377px;top:403px;width:1px;height:171px;background-image:linear-gradient(180deg,#d8d8d8 50%,transparent 50%);background-size:1px 2px"></div>
<div style="position:absolute;left:497px;top:403px;width:1px;height:171px;background-image:linear-gradient(180deg,#d8d8d8 50%,transparent 50%);background-size:1px 2px"></div>
<div style="position:absolute;left:902px;top:403px;width:18px;height:186px;box-sizing:border-box;border-left:1px solid #a0a0a0;background-color:#fff;background-image:repeating-conic-gradient(#e6e6e6 0 25%,#fff 0 50%);background-size:2px 2px"></div>
<div style="position:absolute;left:903px;top:402px;width:17px;height:16px;background:#f0f0f0;box-sizing:border-box;border:1px solid;border-color:#f0f0f0 #696969 #696969 #f0f0f0"></div>
<div style="position:absolute;left:904px;top:403px;width:15px;height:14px;box-sizing:border-box;border:1px solid;border-color:#fff #a0a0a0 #a0a0a0 #fff"></div>
<div style="position:absolute;left:903px;top:418px;width:17px;height:9px;background:#f0f0f0;box-sizing:border-box;border:1px solid;border-color:#f0f0f0 #696969 #696969 #f0f0f0"></div>
<div style="position:absolute;left:904px;top:419px;width:15px;height:7px;box-sizing:border-box;border:1px solid;border-color:#fff #a0a0a0 #a0a0a0 #fff"></div>
<div style="position:absolute;left:903px;top:572px;width:17px;height:17px;background:#f0f0f0;box-sizing:border-box;border:1px solid;border-color:#f0f0f0 #696969 #696969 #f0f0f0"></div>
<div style="position:absolute;left:904px;top:573px;width:15px;height:15px;box-sizing:border-box;border:1px solid;border-color:#fff #a0a0a0 #a0a0a0 #fff"></div>
<svg style="position:absolute;left:908px;top:408px;" width="8" height="5" viewBox="0 0 8 5" shape-rendering="crispEdges"><path d="M4 0L8 4H0Z" fill="#000"/></svg>
<svg style="position:absolute;left:908px;top:578px;" width="8" height="5" viewBox="0 0 8 5" shape-rendering="crispEdges"><path d="M0 0H8L4 4Z" fill="#000"/></svg>
<svg style="position:absolute;left:1px;top:406px;shape-rendering:auto" width="19" height="16" viewBox="0 0 19 16" shape-rendering="crispEdges"><rect x="1.5" y="1.5" width="9" height="7" fill="#fff" stroke="#0a0a30" stroke-width="1.4"/><rect x="1" y="1" width="10" height="2" fill="#0a0a30"/><path d="M3.5 5H8.5" stroke="#8080a0" stroke-width="1"/><path d="M5.5 7.5H11V4L17 9.5L11 15V11.5H5.5Z" fill="#30e0e8" stroke="#000" stroke-width="1.2"/></svg>
<div style="position:absolute;left:17px;top:403px;width:1px;height:171px;background-image:linear-gradient(180deg,#fff 50%,transparent 50%);background-size:1px 2px"></div>
<div style="position:absolute;left:895px;top:403px;width:1px;height:171px;background-image:linear-gradient(180deg,#e0e0e0 50%,transparent 50%);background-size:1px 2px"></div>
<div style="position:absolute;left:922px;top:383px;width:1px;height:206px;background:#a0a0a0"></div>
<div style="position:absolute;left:0px;top:589px;width:922px;height:1px;background:#a0a0a0"></div>
<div style="position:absolute;left:0px;top:590px;width:922px;height:1px;background:#fff"></div>
<div style="position:absolute;left:559px;top:401px;width:20px;height:20px;background:#d0d0d0"></div>
<div style="position:absolute;left:579px;top:401px;width:20px;height:20px;background:#d0d0d0"></div>
<div style="position:absolute;left:599px;top:401px;width:20px;height:20px;background:#d2d2d2"></div>
<div style="position:absolute;left:619px;top:401px;width:20px;height:20px;background:#d0d0d0"></div>
<div style="position:absolute;left:639px;top:401px;width:20px;height:20px;background:#ebebeb"></div>
<div style="position:absolute;left:659px;top:401px;width:16px;height:20px;background:#ececec"></div>
<div style="position:absolute;left:559px;top:421px;width:20px;height:20px;background:#cfcfcf"></div>
<div style="position:absolute;left:579px;top:421px;width:20px;height:20px;background:#cfcfcf"></div>
<div style="position:absolute;left:599px;top:421px;width:20px;height:20px;background:#e6e6e6"></div>
<div style="position:absolute;left:619px;top:421px;width:20px;height:20px;background:#e6e6e6"></div>
<div style="position:absolute;left:639px;top:421px;width:20px;height:20px;background:#e8e8e8"></div>
<div style="position:absolute;left:659px;top:421px;width:16px;height:20px;background:#efefef"></div>
<div style="position:absolute;left:559px;top:441px;width:20px;height:20px;background:#e3e3e3"></div>
<div style="position:absolute;left:579px;top:441px;width:20px;height:20px;background:#efefef"></div>
<div style="position:absolute;left:599px;top:441px;width:20px;height:20px;background:#d6d6d6"></div>
<div style="position:absolute;left:619px;top:441px;width:20px;height:20px;background:#f0f0f0"></div>
<div style="position:absolute;left:639px;top:441px;width:20px;height:20px;background:#e3e3e3"></div>
<div style="position:absolute;left:659px;top:441px;width:16px;height:20px;background:#fff"></div>
<div style="position:absolute;left:559px;top:461px;width:20px;height:20px;background:#e5e5e5"></div>
<div style="position:absolute;left:579px;top:461px;width:20px;height:20px;background:#f0f0f0"></div>
<div style="position:absolute;left:599px;top:461px;width:20px;height:20px;background:#d8d8d8"></div>
<div style="position:absolute;left:619px;top:461px;width:20px;height:20px;background:#fff"></div>
<div style="position:absolute;left:639px;top:461px;width:20px;height:20px;background:#fff"></div>
<div style="position:absolute;left:659px;top:461px;width:16px;height:20px;background:#fff"></div>
<div style="position:absolute;left:559px;top:481px;width:20px;height:20px;background:#e5e5e5"></div>
<div style="position:absolute;left:579px;top:481px;width:20px;height:20px;background:#eeeeee"></div>
<div style="position:absolute;left:599px;top:481px;width:20px;height:20px;background:#d6d6d6"></div>
<div style="position:absolute;left:619px;top:481px;width:20px;height:20px;background:#efefef"></div>
<div style="position:absolute;left:639px;top:481px;width:20px;height:20px;background:#e3e3e3"></div>
<div style="position:absolute;left:659px;top:481px;width:16px;height:20px;background:#fff"></div>
<div style="position:absolute;left:559px;top:501px;width:20px;height:20px;background:#e5e5e5"></div>
<div style="position:absolute;left:579px;top:501px;width:20px;height:20px;background:#f0f0f0"></div>
<div style="position:absolute;left:599px;top:501px;width:20px;height:20px;background:#d8d8d8"></div>
<div style="position:absolute;left:619px;top:501px;width:20px;height:20px;background:#fff"></div>
<div style="position:absolute;left:639px;top:501px;width:20px;height:20px;background:#fff"></div>
<div style="position:absolute;left:659px;top:501px;width:16px;height:20px;background:#fff"></div>
<div style="position:absolute;left:559px;top:521px;width:20px;height:20px;background:#e5e5e5"></div>
<div style="position:absolute;left:579px;top:521px;width:20px;height:20px;background:#f0f0f0"></div>
<div style="position:absolute;left:599px;top:521px;width:20px;height:20px;background:#d8d8d8"></div>
<div style="position:absolute;left:619px;top:521px;width:20px;height:20px;background:#fff"></div>
<div style="position:absolute;left:639px;top:521px;width:20px;height:20px;background:#fff"></div>
<div style="position:absolute;left:659px;top:521px;width:16px;height:20px;background:#fff"></div>
<div style="position:absolute;left:559px;top:541px;width:20px;height:20px;background:#e5e5e5"></div>
<div style="position:absolute;left:579px;top:541px;width:20px;height:20px;background:#f0f0f0"></div>
<div style="position:absolute;left:599px;top:541px;width:20px;height:20px;background:#d8d8d8"></div>
<div style="position:absolute;left:619px;top:541px;width:20px;height:20px;background:#fff"></div>
<div style="position:absolute;left:639px;top:541px;width:20px;height:20px;background:#fff"></div>
<div style="position:absolute;left:659px;top:541px;width:16px;height:20px;background:#fff"></div>
<div style="position:absolute;left:559px;top:561px;width:20px;height:20px;background:#e5e5e5"></div>
<div style="position:absolute;left:579px;top:561px;width:20px;height:20px;background:#f0f0f0"></div>
<div style="position:absolute;left:599px;top:561px;width:20px;height:20px;background:#d8d8d8"></div>
<div style="position:absolute;left:619px;top:561px;width:20px;height:20px;background:#fff"></div>
<div style="position:absolute;left:639px;top:561px;width:20px;height:20px;background:#fff"></div>
<div style="position:absolute;left:659px;top:561px;width:16px;height:20px;background:#fff"></div>
<div style="position:absolute;left:0px;top:593px;width:971px;height:1px;background:#fff"></div>
<div style="position:absolute;left:970px;top:593px;width:1px;height:160px;background:#696969"></div>
<div style="position:absolute;left:0px;top:752px;width:971px;height:1px;background:#696969"></div>
<div style="position:absolute;left:4px;top:600px;width:905px;height:149px;background:#fff;box-sizing:border-box;border:1px solid;border-color:#a0a0a0 #e3e3e3 #e3e3e3 #a0a0a0"></div>
<div style="position:absolute;left:893px;top:601px;width:15px;height:147px;background:#f0f0f0"></div>
<div style="position:absolute;left:893px;top:698px;width:15px;height:16px;background:#cdcdcd"></div>
<div style="position:absolute;left:5px;top:733px;width:888px;height:15px;background:#f0f0f0"></div>
<div style="position:absolute;left:22px;top:734px;width:16px;height:14px;background:#cdcdcd"></div>
<div class="t m" style="left:8px;top:606px;-webkit-text-stroke:0.3px #000">Filling map of folder</div>
<div class="t m" style="left:8px;top:621px;color:#333">******************************************************************************************************************************</div>
<div class="t m" style="left:8px;top:636px;-webkit-text-stroke:0.3px #000">Filling map of folder</div>
<div class="t m" style="left:8px;top:651px;-webkit-text-stroke:0.3px #000"></div>
<div class="t m" style="left:8px;top:666px;color:#333">******************************************************************************</div>
<div class="t m" style="left:8px;top:681px;-webkit-text-stroke:0.3px #000">   Folders        - 1092</div>
<div class="t m" style="left:8px;top:696px;-webkit-text-stroke:0.3px #000">   Files          - 22988 ( 76.91 Gb)</div>
<div class="t m" style="left:8px;top:711px;color:#333">******************************************************************************</div>
<div style="position:absolute;left:913px;top:607px;width:15px;height:135px;background:#fff;box-sizing:border-box;border:1px solid;border-color:#a0a0a0 #fff #fff #a0a0a0"></div>
<div style="position:absolute;left:914px;top:608px;width:1px;height:133px;background:#696969"></div>
<div style="position:absolute;left:914px;top:608px;width:13px;height:1px;background:#696969"></div>
<svg style="position:absolute;left:911px;top:671px;shape-rendering:auto" width="23" height="10" viewBox="0 0 23 10" shape-rendering="crispEdges"><path d="M1 1.5H17L20.5 4.5L17 8.5H1Z" fill="#f0f0f0" stroke="#a0a0a0" stroke-width="1"/><path d="M1.5 2H16.5" stroke="#fff"/></svg>
<div style="position:absolute;left:933px;top:611px;width:4px;height:1px;background:#000"></div>
<div style="position:absolute;left:933px;top:643px;width:4px;height:1px;background:#000"></div>
<div style="position:absolute;left:933px;top:675px;width:4px;height:1px;background:#000"></div>
<div style="position:absolute;left:933px;top:706px;width:4px;height:1px;background:#000"></div>
<div style="position:absolute;left:933px;top:738px;width:4px;height:1px;background:#000"></div>
<svg style="position:absolute;left:896px;top:605px;shape-rendering:auto" width="10" height="7" viewBox="0 0 10 7" shape-rendering="crispEdges"><path d="M1 5.5L4.5 2L8 5.5" fill="none" stroke="#404040" stroke-width="2" stroke-linejoin="miter"/></svg>
<svg style="position:absolute;left:896px;top:720px;shape-rendering:auto" width="10" height="7" viewBox="0 0 10 7" shape-rendering="crispEdges"><path d="M1 1.5L4.5 5L8 1.5" fill="none" stroke="#404040" stroke-width="2" stroke-linejoin="miter"/></svg>
<svg style="position:absolute;left:10px;top:736px;shape-rendering:auto" width="8" height="10" viewBox="0 0 8 10" shape-rendering="crispEdges"><path d="M5.5 1L2 4.5L5.5 8" fill="none" stroke="#404040" stroke-width="2" stroke-linejoin="miter"/></svg>
<svg style="position:absolute;left:879px;top:736px;shape-rendering:auto" width="8" height="10" viewBox="0 0 8 10" shape-rendering="crispEdges"><path d="M2 1L5.5 4.5L2 8" fill="none" stroke="#404040" stroke-width="2" stroke-linejoin="miter"/></svg>
<div style="position:absolute;left:0px;top:753px;width:971px;height:1px;background:#a0a0a0"></div>
<div style="position:absolute;left:43px;top:753px;width:40px;height:19px;background:#f0f0f0;box-sizing:border-box;border:1px solid;border-color:#f0f0f0 #696969 #696969 #fff;border-top:none;border-bottom-right-radius:2px"></div>
<div style="position:absolute;left:44px;top:754px;width:38px;height:17px;box-sizing:border-box;border-right:1px solid #a0a0a0;border-bottom:1px solid #a0a0a0"></div>
<div style="position:absolute;left:85px;top:753px;width:40px;height:19px;background:#f0f0f0;box-sizing:border-box;border:1px solid;border-color:#f0f0f0 #696969 #696969 #fff;border-top:none;border-bottom-right-radius:2px"></div>
<div style="position:absolute;left:86px;top:754px;width:38px;height:17px;box-sizing:border-box;border-right:1px solid #a0a0a0;border-bottom:1px solid #a0a0a0"></div>
<div style="position:absolute;left:127px;top:753px;width:54px;height:19px;background:#f0f0f0;box-sizing:border-box;border:1px solid;border-color:#f0f0f0 #696969 #696969 #fff;border-top:none;border-bottom-right-radius:2px"></div>
<div style="position:absolute;left:128px;top:754px;width:52px;height:17px;box-sizing:border-box;border-right:1px solid #a0a0a0;border-bottom:1px solid #a0a0a0"></div>
<div style="position:absolute;left:182px;top:753px;width:40px;height:19px;background:#f0f0f0;box-sizing:border-box;border:1px solid;border-color:#f0f0f0 #696969 #696969 #fff;border-top:none;border-bottom-right-radius:2px"></div>
<div style="position:absolute;left:183px;top:754px;width:38px;height:17px;box-sizing:border-box;border-right:1px solid #a0a0a0;border-bottom:1px solid #a0a0a0"></div>
<div style="position:absolute;left:224px;top:753px;width:60px;height:19px;background:#f0f0f0;box-sizing:border-box;border:1px solid;border-color:#f0f0f0 #696969 #696969 #fff;border-top:none;border-bottom-right-radius:2px"></div>
<div style="position:absolute;left:225px;top:754px;width:58px;height:17px;box-sizing:border-box;border-right:1px solid #a0a0a0;border-bottom:1px solid #a0a0a0"></div>
<div class="t " style="left:6px;top:758px;font-size:10.7px">Log</div>
<div class="t " style="left:48px;top:756px;font-size:10.7px">Map</div>
<div class="t " style="left:90px;top:756px;font-size:10.7px">HEX</div>
<div class="t " style="left:132px;top:756px;font-size:10.7px">Structure</div>
<div class="t " style="left:187px;top:756px;font-size:10.7px">Status</div>
<div class="t " style="left:229px;top:756px;font-size:10.7px">Processes</div>
<div style="position:absolute;left:2px;top:755px;width:39px;height:16px;box-sizing:border-box;border:1px dotted #000"></div>
<div style="position:absolute;left:0px;top:773px;width:42px;height:1px;background:#696969"></div>
<div style="position:absolute;left:42px;top:773px;width:929px;height:1px;background:#a0a0a0"></div>
<div style="position:absolute;left:0px;top:774px;width:971px;height:1px;background:#a0a0a0"></div>
<div style="position:absolute;left:0px;top:782px;width:971px;height:1px;background:#fff"></div>
<div style="position:absolute;left:-1px;top:793px;width:314px;height:45px;box-sizing:border-box;border:1px solid #a8a8a8"></div>
<div style="position:absolute;left:0px;top:794px;width:314px;height:45px;box-sizing:border-box;border:1px solid #fff;border-right:none;border-bottom:none"></div>
<div style="position:absolute;left:313px;top:793px;width:1px;height:45px;background:#fff"></div>
<div class="t " style="left:3px;top:789px;background:#f0f0f0;padding:0 1px;color:#1a1a1a">Status register (SATA1)-[PIO4]</div>
<div style="position:absolute;left:315px;top:793px;width:318px;height:45px;box-sizing:border-box;border:1px solid #a8a8a8"></div>
<div style="position:absolute;left:316px;top:794px;width:318px;height:45px;box-sizing:border-box;border:1px solid #fff;border-right:none;border-bottom:none"></div>
<div style="position:absolute;left:633px;top:793px;width:1px;height:45px;background:#fff"></div>
<div class="t " style="left:323px;top:789px;background:#f0f0f0;padding:0 1px;color:#1a1a1a">Error register (SATA1)</div>
<div style="position:absolute;left:636px;top:793px;width:58px;height:45px;box-sizing:border-box;border:1px solid #a8a8a8"></div>
<div style="position:absolute;left:637px;top:794px;width:58px;height:45px;box-sizing:border-box;border:1px solid #fff;border-right:none;border-bottom:none"></div>
<div style="position:absolute;left:694px;top:793px;width:1px;height:45px;background:#fff"></div>
<div class="t " style="left:644px;top:789px;background:#f0f0f0;padding:0 1px;color:#1a1a1a">DMA</div>
<div style="position:absolute;left:697px;top:793px;width:58px;height:45px;box-sizing:border-box;border:1px solid #a8a8a8"></div>
<div style="position:absolute;left:698px;top:794px;width:58px;height:45px;box-sizing:border-box;border:1px solid #fff;border-right:none;border-bottom:none"></div>
<div style="position:absolute;left:755px;top:793px;width:1px;height:45px;background:#fff"></div>
<div class="t " style="left:704px;top:789px;background:#f0f0f0;padding:0 1px;color:#1a1a1a">SATA-II</div>
<div style="position:absolute;left:849px;top:793px;width:88px;height:45px;box-sizing:border-box;border:1px solid #a8a8a8"></div>
<div style="position:absolute;left:850px;top:794px;width:88px;height:45px;box-sizing:border-box;border:1px solid #fff;border-right:none;border-bottom:none"></div>
<div style="position:absolute;left:937px;top:793px;width:1px;height:45px;background:#fff"></div>
<div class="t " style="left:856px;top:789px;background:#f0f0f0;padding:0 1px;color:#1a1a1a">Power 5V</div>
<div style="position:absolute;left:939px;top:793px;width:91px;height:45px;box-sizing:border-box;border:1px solid #a8a8a8"></div>
<div style="position:absolute;left:940px;top:794px;width:91px;height:45px;box-sizing:border-box;border:1px solid #fff;border-right:none;border-bottom:none"></div>
<div style="position:absolute;left:1030px;top:793px;width:1px;height:45px;background:#fff"></div>
<div class="t " style="left:946px;top:789px;background:#f0f0f0;padding:0 1px;color:#1a1a1a">Power 12V</div>
<div style="position:absolute;left:5px;top:805px;width:21px;height:11px;box-sizing:border-box;border:1px solid #7a7a7a;background:#c4c4c4"></div>
<div class="t " style="left:-5px;top:818px;width:41px;text-align:center;color:#24406c;font-size:12.5px">BSY</div>
<div style="position:absolute;left:44px;top:805px;width:21px;height:11px;box-sizing:border-box;border:1px solid #7a7a7a;background:#00f000"></div>
<div class="t " style="left:34px;top:818px;width:41px;text-align:center;color:#24406c;font-size:12.5px">DRD</div>
<div style="position:absolute;left:83px;top:805px;width:21px;height:11px;box-sizing:border-box;border:1px solid #7a7a7a;background:#c4c4c4"></div>
<div class="t " style="left:73px;top:818px;width:41px;text-align:center;color:#24406c;font-size:12.5px">DWF</div>
<div style="position:absolute;left:122px;top:805px;width:21px;height:11px;box-sizing:border-box;border:1px solid #7a7a7a;background:#00f000"></div>
<div class="t " style="left:112px;top:818px;width:41px;text-align:center;color:#24406c;font-size:12.5px">DSC</div>
<div style="position:absolute;left:161px;top:805px;width:21px;height:11px;box-sizing:border-box;border:1px solid #7a7a7a;background:#c4c4c4"></div>
<div class="t " style="left:151px;top:818px;width:41px;text-align:center;color:#24406c;font-size:12.5px">DRQ</div>
<div style="position:absolute;left:200px;top:805px;width:21px;height:11px;box-sizing:border-box;border:1px solid #7a7a7a;background:#c4c4c4"></div>
<div class="t " style="left:190px;top:818px;width:41px;text-align:center;color:#24406c;font-size:12.5px">CRR</div>
<div style="position:absolute;left:239px;top:805px;width:21px;height:11px;box-sizing:border-box;border:1px solid #7a7a7a;background:#c4c4c4"></div>
<div class="t " style="left:229px;top:818px;width:41px;text-align:center;color:#24406c;font-size:12.5px">IDX</div>
<div style="position:absolute;left:278px;top:805px;width:21px;height:11px;box-sizing:border-box;border:1px solid #7a7a7a;background:#c4c4c4"></div>
<div class="t " style="left:268px;top:818px;width:41px;text-align:center;color:#24406c;font-size:12.5px">ERR</div>
<div style="position:absolute;left:326px;top:805px;width:21px;height:11px;box-sizing:border-box;border:1px solid #7a7a7a;background:#c4c4c4"></div>
<div class="t " style="left:316px;top:818px;width:41px;text-align:center;color:#24406c;font-size:12.5px">BBK</div>
<div style="position:absolute;left:365px;top:805px;width:21px;height:11px;box-sizing:border-box;border:1px solid #7a7a7a;background:#c4c4c4"></div>
<div class="t " style="left:355px;top:818px;width:41px;text-align:center;color:#24406c;font-size:12.5px">UNC</div>
<div style="position:absolute;left:404px;top:805px;width:21px;height:11px;box-sizing:border-box;border:1px solid #7a7a7a;background:#c4c4c4"></div>
<div style="position:absolute;left:443px;top:805px;width:21px;height:11px;box-sizing:border-box;border:1px solid #7a7a7a;background:#c4c4c4"></div>
<div class="t " style="left:433px;top:818px;width:41px;text-align:center;color:#24406c;font-size:12.5px">INF</div>
<div style="position:absolute;left:482px;top:805px;width:21px;height:11px;box-sizing:border-box;border:1px solid #7a7a7a;background:#c4c4c4"></div>
<div style="position:absolute;left:521px;top:805px;width:21px;height:11px;box-sizing:border-box;border:1px solid #7a7a7a;background:#c4c4c4"></div>
<div class="t " style="left:511px;top:818px;width:41px;text-align:center;color:#24406c;font-size:12.5px">ABR</div>
<div style="position:absolute;left:560px;top:805px;width:21px;height:11px;box-sizing:border-box;border:1px solid #7a7a7a;background:#c4c4c4"></div>
<div class="t " style="left:550px;top:818px;width:41px;text-align:center;color:#24406c;font-size:12.5px">TON</div>
<div style="position:absolute;left:599px;top:805px;width:21px;height:11px;box-sizing:border-box;border:1px solid #7a7a7a;background:#c4c4c4"></div>
<div class="t " style="left:589px;top:818px;width:41px;text-align:center;color:#24406c;font-size:12.5px">AMN</div>
<div style="position:absolute;left:655px;top:805px;width:21px;height:11px;box-sizing:border-box;border:1px solid #7a7a7a;background:#c4c4c4"></div>
<div class="t " style="left:645px;top:818px;width:41px;text-align:center;color:#24406c;font-size:12.5px">RQ</div>
<div style="position:absolute;left:716px;top:805px;width:21px;height:11px;box-sizing:border-box;border:1px solid #7a7a7a;background:#00f000"></div>
<div class="t " style="left:706px;top:818px;width:41px;text-align:center;color:#24406c;font-size:12.5px">PHY</div>
<div style="position:absolute;left:883px;top:805px;width:21px;height:11px;box-sizing:border-box;border:1px solid #7a7a7a;background:#00f000"></div>
<div class="t " style="left:873px;top:818px;width:41px;text-align:center;color:#24406c;font-size:12.5px">5V</div>
<div style="position:absolute;left:973px;top:805px;width:21px;height:11px;box-sizing:border-box;border:1px solid #7a7a7a;background:#00f000"></div>
<div class="t " style="left:963px;top:818px;width:41px;text-align:center;color:#24406c;font-size:12.5px">12V</div>
</body></html>
